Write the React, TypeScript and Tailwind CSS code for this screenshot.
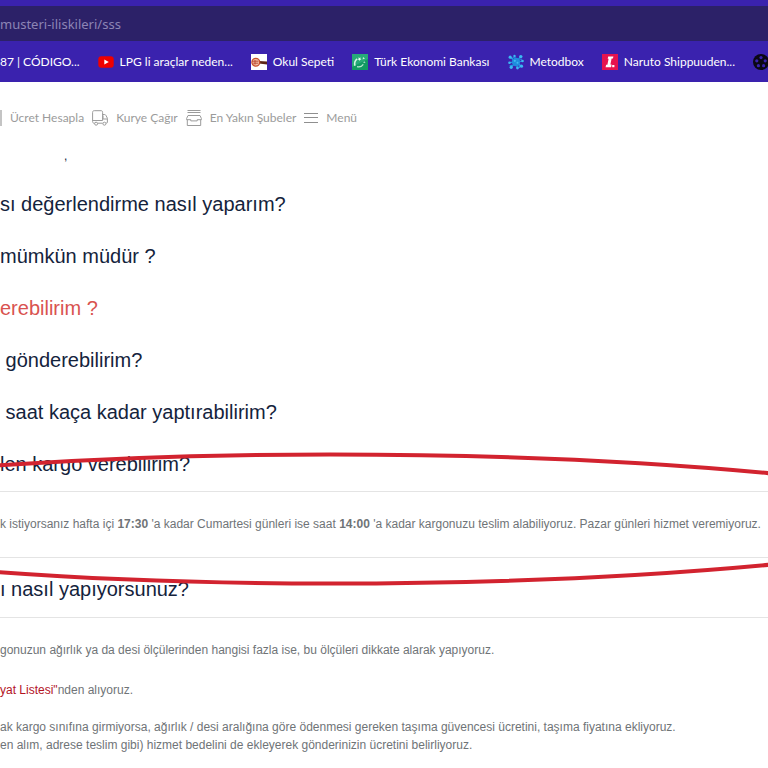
import type { ReactNode } from "react"

const YoutubeIcon = () => (
  <svg viewBox="0 0 16 16" className="w-4 h-4 shrink-0" aria-hidden="true">
    <rect x="0.3" y="2.2" width="15.4" height="11.6" rx="3" fill="#f00000" />
    <path d="M6.3 5.4v5.2L10.8 8z" fill="#fff" />
  </svg>
)

const OkulIcon = () => (
  <svg viewBox="0 0 16 16" className="w-4 h-4 shrink-0" aria-hidden="true">
    <rect width="16" height="16" fill="#fff" />
    <path d="M8 7l8 .4v3l-8-1z" fill="#5b2417" />
    <circle cx="4.8" cy="8.2" r="3.9" fill="#f3bfa6" stroke="#c8502c" strokeWidth="1.3" />
    <path d="M1 7.2h6.5M2.2 9.2h5M4 6v4.6" stroke="#b8452f" strokeWidth="0.9" />
  </svg>
)

const TebIcon = () => (
  <svg viewBox="0 0 16 16" className="w-4 h-4 shrink-0" aria-hidden="true">
    <rect width="16" height="16" fill="#129a63" />
    <path d="M0 0h16v5L0 13z" fill="#27ab78" />
    <path d="M3 11.8c-.8-3 .2-5.6 2.2-7" fill="none" stroke="#d9f5e6" strokeWidth="1.5" />
    <path d="M6.5 3.2l1 .9 1.2-.6-.3 1.3 1 .9-1.4.1-.6 1.2-.5-1.2-1.3-.2 1-.9z" fill="#e8fff3" />
    <path d="M11 3l2 1.6-2.4.8zM12 7.2l1.6 1.4-2.2.4z" fill="#c7f0dc" />
    <path d="M5 12.6c2.6.7 5-.3 6.3-2.2" fill="none" stroke="#b6ead0" strokeWidth="1.2" />
  </svg>
)

const MetodboxIcon = () => (
  <svg viewBox="0 0 16 16" className="w-4 h-4 shrink-0" aria-hidden="true">
    <g stroke="#2399e6" strokeWidth="1.1" fill="none">
      <path d="M8 8L2 3M8 8L6.5 1.5M8 8l5-6M8 8l7-1M8 8l6 4.5M8 8l1.5 6.5M8 8l-5 6M8 8L1 8.6M4 5l1.6-2M11 5l3 .2M4.6 11l-3 1M11 11l.6 3" />
    </g>
    <circle cx="8" cy="8" r="4.2" fill="#1f8bdd" />
    <g fill="#3bb9f2">
      <circle cx="2.2" cy="3.2" r="1.6" />
      <circle cx="6.5" cy="2" r="1.2" />
      <circle cx="12.8" cy="2.6" r="1.7" />
      <circle cx="14.5" cy="7" r="1.3" />
      <circle cx="13.5" cy="12.2" r="1.6" />
      <circle cx="9.5" cy="14" r="1.4" />
      <circle cx="3.2" cy="13.3" r="1.6" />
      <circle cx="1.5" cy="8.7" r="1.3" />
      <circle cx="6.8" cy="6.8" r="1.1" />
      <circle cx="9.5" cy="8.7" r="1" />
    </g>
  </svg>
)

const NarutoIcon = () => (
  <svg viewBox="0 0 16 16" className="w-4 h-4 shrink-0" aria-hidden="true">
    <rect width="16" height="16" fill="#e5134f" />
    <path d="M6.2 2.4h5.2l-.5 2.2H9.6l-1.2 6h1.2l-.5 2.6H3.6l.5-2.4h1.3l1.2-6H5.7z" fill="#fff" />
    <rect x="10.2" y="11" width="2.2" height="2.2" fill="#fff" />
  </svg>
)

const ReelIcon = () => (
  <svg viewBox="0 0 16 16" className="w-4 h-4 shrink-0" aria-hidden="true">
    <circle cx="8" cy="8" r="8" fill="#0b0814" />
    <g fill="#3a22ae">
      <circle cx="8" cy="3.6" r="1.6" />
      <circle cx="3.8" cy="6.8" r="1.6" />
      <circle cx="12.2" cy="6.8" r="1.6" />
      <circle cx="5.4" cy="11.7" r="1.6" />
      <circle cx="10.6" cy="11.7" r="1.6" />
    </g>
  </svg>
)

const TruckIcon = () => (
  <svg viewBox="0 0 16 16" className="w-4 h-4 shrink-0" fill="none" stroke="#9b9b9b" aria-hidden="true">
    <path d="M2.6 13.2H2.2C1.100 13.2.6 12.600.6 11.600V2.400C.6 1.200 1.200.7 2.200.7h6.800c1.100 0 1.600.5 1.600 1.600V10.500H.6" />
    <path d="M10.600 4.500h1.800c.8 0 1.200.3 1.600 1l1.400 2.700v3.800c0 .8-.4 1.200-1.200 1.200M5.600 13.200h5M11 5.500v3.500h4" />
    <circle cx="4.100" cy="13.700" r="1.500" />
    <circle cx="12.400" cy="13.700" r="1.500" />
  </svg>
)

const StoreIcon = () => (
  <svg viewBox="0 0 16 16" className="w-4 h-4 shrink-0" fill="none" stroke="#9b9b9b" aria-hidden="true">
    <path d="M1.5.5h13M1.500 2.500h13M2 5.500h12l1.400 3v1.200H11.200v1.200H4.800V9.700H.6V8.500zM1.300 9.700v5.800h13.400V9.700" />
  </svg>
)

const MenuIcon = () => (
  <svg viewBox="0 0 14 10" className="w-[14px] h-[10px] shrink-0" stroke="#8f8f8f" aria-hidden="true">
    <path d="M0 .5h14M0 4.500h14M0 9.500h14" />
  </svg>
)

const Bookmark = ({ icon, label }: { icon?: ReactNode; label: string }) => (
  <a href="#" className="flex items-center gap-[6px] whitespace-nowrap">
    {icon}
    {label}
  </a>
)

const NavItem = ({ icon, label }: { icon?: ReactNode; label: string }) => (
  <a href="#" className="flex items-center gap-2 whitespace-nowrap">
    {icon}
    {label}
  </a>
)

interface QuestionProps {
  text: string
  active?: boolean
  tall?: boolean
}

const Question = ({ text, active = false, tall = false }: QuestionProps) => (
  <h2 className={tall ? "pt-1 h-[59px]" : "h-[52px]"}>
    <button
      type="button"
      className={
        active
          ? "w-full h-full pb-0.5 text-left text-xl whitespace-pre text-[#d9534f]"
          : "w-full h-full pb-0.5 text-left text-xl whitespace-pre text-[#14233c]"
      }
    >
      {text}
    </button>
  </h2>
)

// Hand drawn loop around the highlighted answer
const Marker = () => (
  <svg
    viewBox="0 0 768 140"
    preserveAspectRatio="none"
    className="absolute left-0 top-[11px] w-full h-[140px] pointer-events-none"
    fill="none"
    stroke="#d2232f"
    strokeWidth="4"
    aria-hidden="true"
  >
    <path d="M-4 15.5C90 9 190 4.5 330 4.5C490 4.5 640 11 772 23.5" />
    <path d="M-4 122C90 129 200 133.5 330 133.5C490 133.5 640 127 772 114.5" />
  </svg>
)

export default function App() {
  return (
    <div className="min-h-screen overflow-hidden bg-white font-['Liberation_Sans',sans-serif]">
      <header className="bg-[#3a22ae] pt-[6px]">
        <input
          type="text"
          aria-label="Adres"
          defaultValue="musteri-iliskileri/sss"
          className="block w-full h-[35px] bg-[#2c2168] text-[13px] text-[#8d85b5] outline-none font-['Noto_Sans',sans-serif]"
        />
        <nav className="flex items-center gap-[18px] h-[41px] text-xs text-white font-['Lato',sans-serif]">
          <Bookmark label="87 | CÓDIGO..." />
          <Bookmark icon={<YoutubeIcon />} label="LPG li araçlar neden..." />
          <Bookmark icon={<OkulIcon />} label="Okul Sepeti" />
          <Bookmark icon={<TebIcon />} label="Türk Ekonomi Bankası" />
          <Bookmark icon={<MetodboxIcon />} label="Metodbox" />
          <Bookmark icon={<NarutoIcon />} label="Naruto Shippuuden..." />
          <a href="#" aria-label="Film">
            <ReelIcon />
          </a>
        </nav>
      </header>

      <nav className="flex items-center gap-2 h-[72px] text-xs text-[#9b9b9b] font-['Lato',sans-serif]">
        <NavItem icon={<span className="w-[2px] h-4 bg-[#c4c4c4]" />} label="Ücret Hesapla" />
        <NavItem icon={<TruckIcon />} label="Kurye Çağır" />
        <NavItem icon={<StoreIcon />} label="En Yakın Şubeler" />
        <button type="button" className="flex items-center gap-2 whitespace-nowrap">
          <MenuIcon />
          Menü
        </button>
      </nav>

      <main>
        <p className="h-[25px] pl-16 text-xs leading-[4px] text-[#14233c]">,</p>
        <Question text="sı değerlendirme nasıl yaparım?" />
        <Question text="mümkün müdür ?" />
        <Question text="erebilirim ?" active />
        <Question text=" gönderebilirim?" />
        <Question text=" saat kaça kadar yaptırabilirim?" />

        <section className="relative">
          <Question text="len kargo verebilirim?" />
          <div className="flex items-center h-[67px] border-y border-[#e4e4e4] pb-0.5 text-xs text-[#6f7477]">
            <p className="whitespace-nowrap">
              k istiyorsanız hafta içi <b>17:30</b> 'a kadar Cumartesi günleri ise saat <b>14:00</b> 'a
              kadar kargonuzu teslim alabiliyoruz. Pazar günleri hizmet veremiyoruz.
            </p>
          </div>
          <Marker />
        </section>

        <section>
          <Question text="ı nasıl yapıyorsunuz?" tall />
          <div className="border-t border-[#e4e4e4] pt-[23px] text-xs leading-[18px] text-[#6f7477] whitespace-nowrap">
            <p>gonuzun ağırlık ya da desi ölçülerinden hangisi fazla ise, bu ölçüleri dikkate alarak yapıyoruz.</p>
            <p className="mt-[22px]">
              <a href="#" className="text-[#b3131f]">yat Listesi"</a>nden alıyoruz.
            </p>
            <p className="mt-[19px]">
              ak kargo sınıfına girmiyorsa, ağırlık / desi aralığına göre ödenmesi gereken taşıma güvencesi
              ücretini, taşıma fiyatına ekliyoruz.
              <br />
              en alım, adrese teslim gibi) hizmet bedelini de ekleyerek gönderinizin ücretini belirliyoruz.
            </p>
          </div>
        </section>
      </main>
    </div>
  )
}
